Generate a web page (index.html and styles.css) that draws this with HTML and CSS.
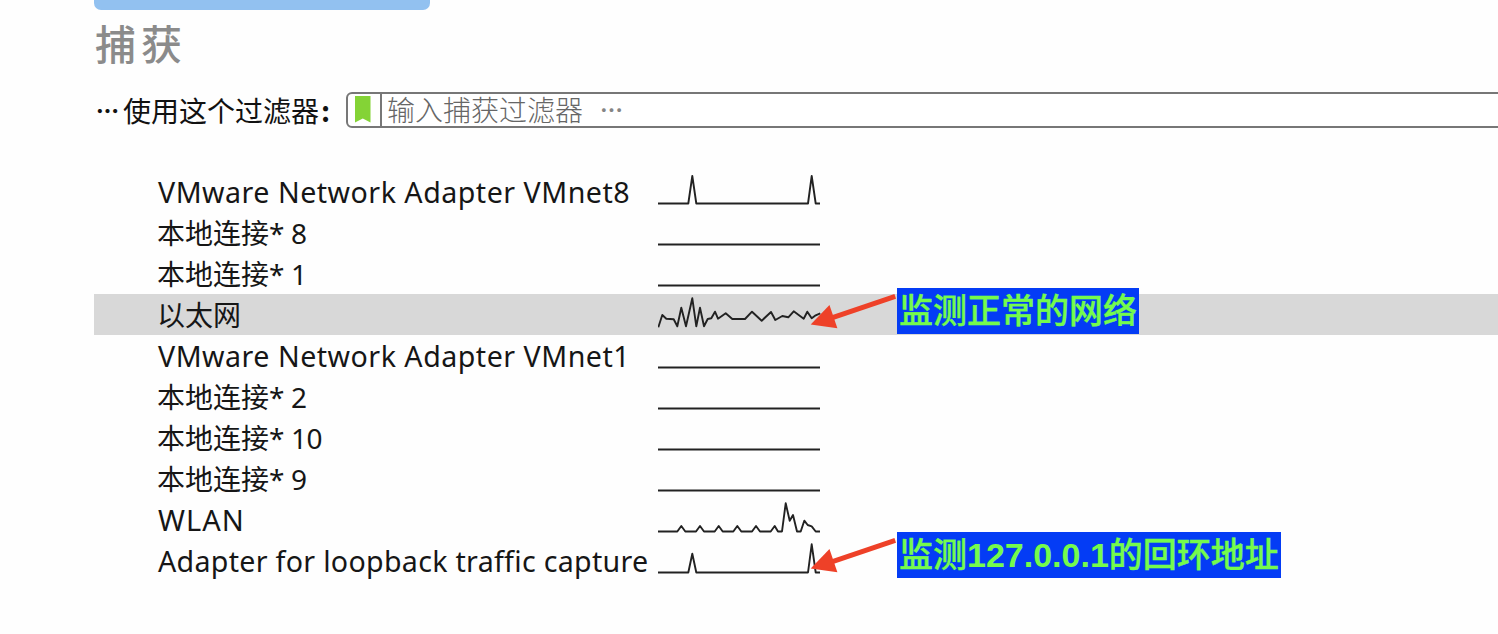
FILE: index.html
```
<!DOCTYPE html>
<html lang="zh-CN">
<head>
<meta charset="utf-8">
<title>捕获</title>
<link rel="stylesheet" href="styles.css">
</head>
<body>
<main class="page">
  <div class="banner"></div>
  <h1 class="title">捕获</h1>
  <div class="filter">
    <span class="dots">…</span>
    <label class="filter-label">使用这个过滤器<span class="colon">:</span></label>
    <div class="filter-box">
      <div class="bookmark"><svg width="16" height="27" viewBox="0 0 16 27"><path d="M0 0H15.5V26.5L7.8 22.5L0 26.5Z" fill="#84d336"/></svg></div>
      <span class="placeholder">输入捕获过滤器</span>
      <span class="dots dots-muted">…</span>
    </div>
  </div>
  <ul class="list">
    <li class="row"><span class="name vm">VMware Network Adapter VMnet8</span><svg class="spark" viewBox="0 0 166 41"><path d="M0 32.5H30.3L34.3 5L38.3 32.5H150L153.7 5L157.7 32.5H162"/></svg></li>
    <li class="row"><span class="name">本地连接<span class="num">* 8</span></span><svg class="spark" viewBox="0 0 166 41"><path d="M0 32.5H162"/></svg></li>
    <li class="row"><span class="name">本地连接<span class="num">* 1</span></span><svg class="spark" viewBox="0 0 166 41"><path d="M0 32.5H162"/></svg></li>
    <li class="row selected"><span class="name">以太网</span><svg class="spark" viewBox="0 0 166 41"><path d="M.3 33.3L4.3 21L8.3 24.7L15.7 25.3L19.3 32.3L23.3 13.7L28 32.3L34.3 4.3L38.3 32.3L42 13.7L46 32.3L49.7 25L53.3 24.3L57 17.7L60 24.7L67.7 19.3L74.3 25H87L94 17.7L103.7 26.7L113 18L117.3 26L124.3 22L130.3 23.3L135.7 17.3L145.7 24.7L149.3 17.7L153.7 24.3L157.7 21.3L162.3 19.3"/></svg></li>
    <li class="row"><span class="name vm">VMware Network Adapter VMnet1</span><svg class="spark" viewBox="0 0 166 41"><path d="M0 32.5H162"/></svg></li>
    <li class="row"><span class="name">本地连接<span class="num">* 2</span></span><svg class="spark" viewBox="0 0 166 41"><path d="M0 32.5H162"/></svg></li>
    <li class="row"><span class="name">本地连接<span class="num">* 10</span></span><svg class="spark" viewBox="0 0 166 41"><path d="M0 32.5H162"/></svg></li>
    <li class="row"><span class="name">本地连接<span class="num">* 9</span></span><svg class="spark" viewBox="0 0 166 41"><path d="M0 32.5H162"/></svg></li>
    <li class="row"><span class="name wlan">WLAN</span><svg class="spark" viewBox="0 0 166 41"><path d="M0 32.5H19.3L23.3 27L27.3 32.5H38L42 27L46 32.5H56.7L60.7 27L64.7 32.5H75.3L79.3 27L83.3 32.5H94L98 27L102 32.5H112.7L116.7 27L120 32.5H124L127.7 4.3L131.7 21.7L135 16L139 32.5H142.7L146.3 21.7L149.7 26L153.7 27.3L157.7 32.5H162"/></svg></li>
    <li class="row"><span class="name loop">Adapter for loopback traffic capture</span><svg class="spark" viewBox="0 0 166 41"><path d="M0 32.5H30.3L34.3 13.7L38.3 32.5H150L153.7 4.3L157.7 32.5H162"/></svg></li>
  </ul>
  <div class="note note-net">
    <svg class="arrow" width="88" height="40" viewBox="0 0 88 40"><path d="M86.2 8.3L22 29.9" stroke="#ee4128" stroke-width="5"/><path d="M.7 36.7L19.7 17L27.7 40.5Z" fill="#ee4128"/></svg>
    <span class="note-text">监测正常的网络</span>
  </div>
  <div class="note note-loop">
    <svg class="arrow" width="88" height="40" viewBox="0 0 88 40"><path d="M86.2 8.3L22 29.9" stroke="#ee4128" stroke-width="5"/><path d="M.7 36.7L19.7 17L27.7 40.5Z" fill="#ee4128"/></svg>
    <span class="note-text">监测<b>127.0.0.1</b>的回环地址</span>
  </div>
</main>
</body>
</html>
```
FILE: styles.css
```
* { box-sizing: border-box; }
body { margin: 0; background: #fefefe; font-family: "Noto Sans", "Noto Sans CJK SC", sans-serif; color: #161616; }
.page { position: relative; width: 1498px; height: 634px; overflow: hidden; padding-left: 94px; }
.banner { width: 336px; height: 10px; background: #92c1f0; border-radius: 0 0 7px 7px; }
.title { margin: 8px 0 0 1px; height: 48px; font: 500 41px/48px "Noto Sans CJK SC", sans-serif; letter-spacing: 5px; color: #8b8b8b; }
.filter { display: flex; align-items: center; height: 36px; margin-top: 26px; font-family: "Noto Sans CJK SC", sans-serif; font-size: 28px; line-height: 36px; white-space: nowrap; color: #111; }
.dots { width: 30px; flex: none; padding-left: 2px; font-size: 23px; font-weight: 900; }
.dots-muted { font-weight: 700; margin-top: -2px; }
.filter-label { width: 222px; margin-left: -1px; margin-right: 1px; flex: none; }
.colon { margin-left: 2px; font-weight: 700; }
.filter-box { flex: none; display: flex; align-items: center; width: 1180px; height: 36px; border: 2px solid #777; border-radius: 6px; color: #858585; background: #fff; }
.bookmark { display: flex; width: 34px; height: 32px; padding: 2px 0 0 7px; border-right: 2px solid #777; flex: none; }
.placeholder { margin: -2px 0 0 5px; width: 211px; font-weight: 300; color: #666; }
.list { list-style: none; margin: 43px 0 0; padding: 0; }
.row { display: flex; height: 41px; padding-left: 64px; font-size: 28px; line-height: 43px; white-space: nowrap; }
.selected { background: #d8d8d8; }
.name { width: 500px; margin-left: -1px; margin-right: 1px; flex: none; }
.vm, .wlan, .loop { margin-left: 0; margin-right: 0; line-height: 41px; }
.vm { font-size: 28.6px; letter-spacing: .5px; }
.wlan { font-size: 29px; letter-spacing: 1px; }
.loop { font-size: 28.6px; letter-spacing: .3px; }
.num { letter-spacing: -.4px; }
.spark { width: 166px; height: 41px; flex: none; fill: none; stroke: #222; stroke-width: 1.9; stroke-linejoin: round; }
.note { position: absolute; left: 810px; display: flex; align-items: flex-start; }
.note-net { top: 288px; }
.note-loop { top: 532px; }
.arrow { width: 87px; overflow: visible; flex: none; }
.note-text { height: 46px; padding: 0 2px; background: #043cf5; color: #75fb4c; font: 500 34px/42px "Noto Sans CJK SC", sans-serif; -webkit-text-stroke: .4px #75fb4c; white-space: nowrap; }
.note-text b { font-family: "Liberation Sans", sans-serif; font-weight: 700; -webkit-text-stroke: 0; }
```
